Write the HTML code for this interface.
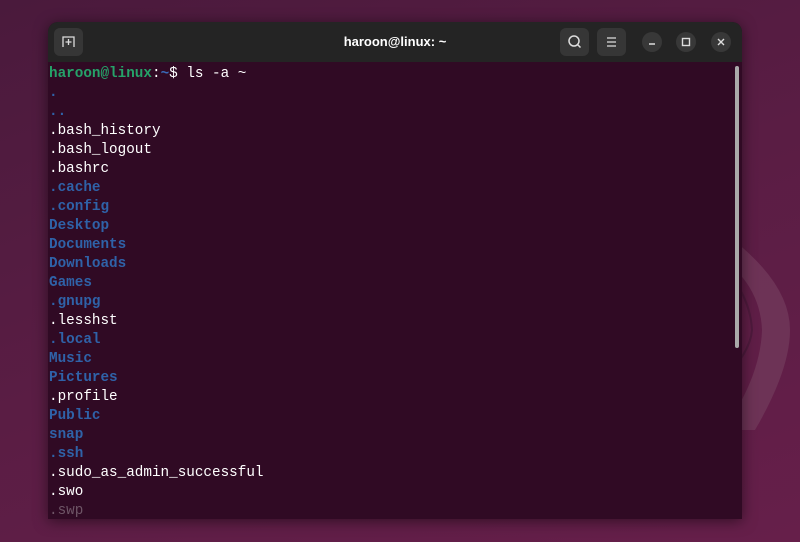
<!DOCTYPE html>
<html><head><style>
body{margin:0;width:800px;height:542px;overflow:hidden;background:linear-gradient(160deg,#4a1a3c 0%,#5a1d44 50%,#661f4a 100%);position:relative;font-family:"Liberation Sans",sans-serif}
.logo{position:absolute;left:700px;top:230px;width:130px;height:200px}
.win{position:absolute;left:48px;top:22px;width:694px;height:497px;background:#300a24;border-radius:10px 10px 0 0;overflow:hidden;box-shadow:0 2px 14px rgba(0,0,0,.5)}
.tb{height:40px;background:#242424;position:relative}
.btn{position:absolute;top:6px;width:29px;height:28px;background:#363636;border-radius:6px}
.cb{position:absolute;top:10px;width:20px;height:20px;background:#383838;border-radius:50%}
.title{position:absolute;left:0;right:0;top:12px;text-align:center;color:#fff;font-weight:bold;font-size:13px}
pre{margin:0;padding:3px 0 0 1px;font-family:"Liberation Mono",monospace;font-size:14.3px;line-height:19px;color:#fff}
.d{color:#2f62a8;font-weight:bold}
.g{color:#26a269;font-weight:bold}
.b{color:#3a6ab8;font-weight:bold}
.sb{position:absolute;left:687px;top:44px;width:4px;height:282px;background:#aaa;border-radius:2px}
</style></head><body>
<svg class="logo" viewBox="0 0 130 200"><path d="M20 0 Q90 50 90 100 Q90 140 55 200 L30 230 L0 260 L0 230 Q60 160 62 100 Q60 50 10 20 Z" fill="#6f3558" opacity=".9"/><path d="M12 25 Q50 60 52 100 Q50 130 0 170" stroke="#4f1a3d" stroke-width="2" fill="none"/></svg>
<div class="win">
<div class="tb">
<div class="btn" style="left:6px"><svg width="29" height="28"><path d="M9 19V9h11v10M14.5 11v6M11.5 14h6" stroke="#ddd" stroke-width="1.3" fill="none"/></svg></div>
<div class="title">haroon@linux: ~</div>
<div class="btn" style="left:512px"><svg width="29" height="28"><circle cx="14" cy="13" r="5" stroke="#ddd" stroke-width="1.5" fill="none"/><path d="M17.5 16.5l3 3" stroke="#ddd" stroke-width="1.5"/></svg></div>
<div class="btn" style="left:549px"><svg width="29" height="28"><path d="M10 10h9M10 14h9M10 18h9" stroke="#ddd" stroke-width="1.3"/></svg></div>
<div class="cb" style="left:594px"><svg width="20" height="20"><path d="M7 12h6" stroke="#ddd" stroke-width="1.4"/></svg></div>
<div class="cb" style="left:628px"><svg width="20" height="20"><rect x="6.5" y="6.5" width="7" height="7" stroke="#ddd" stroke-width="1.4" fill="none"/></svg></div>
<div class="cb" style="left:663px"><svg width="20" height="20"><path d="M7 7l6 6M13 7l-6 6" stroke="#ddd" stroke-width="1.4"/></svg></div>
</div>
<pre><span class="g">haroon@linux</span>:<span class="b">~</span>$ ls -a ~
<span class="d">.</span>
<span class="d">..</span>
.bash_history
.bash_logout
.bashrc
<span class="d">.cache</span>
<span class="d">.config</span>
<span class="d">Desktop</span>
<span class="d">Documents</span>
<span class="d">Downloads</span>
<span class="d">Games</span>
<span class="d">.gnupg</span>
.lesshst
<span class="d">.local</span>
<span class="d">Music</span>
<span class="d">Pictures</span>
.profile
<span class="d">Public</span>
<span class="d">snap</span>
<span class="d">.ssh</span>
.sudo_as_admin_successful
.swo
<span style="color:#6e5566">.swp</span></pre>
<div class="sb"></div>
</div>
</body></html>
